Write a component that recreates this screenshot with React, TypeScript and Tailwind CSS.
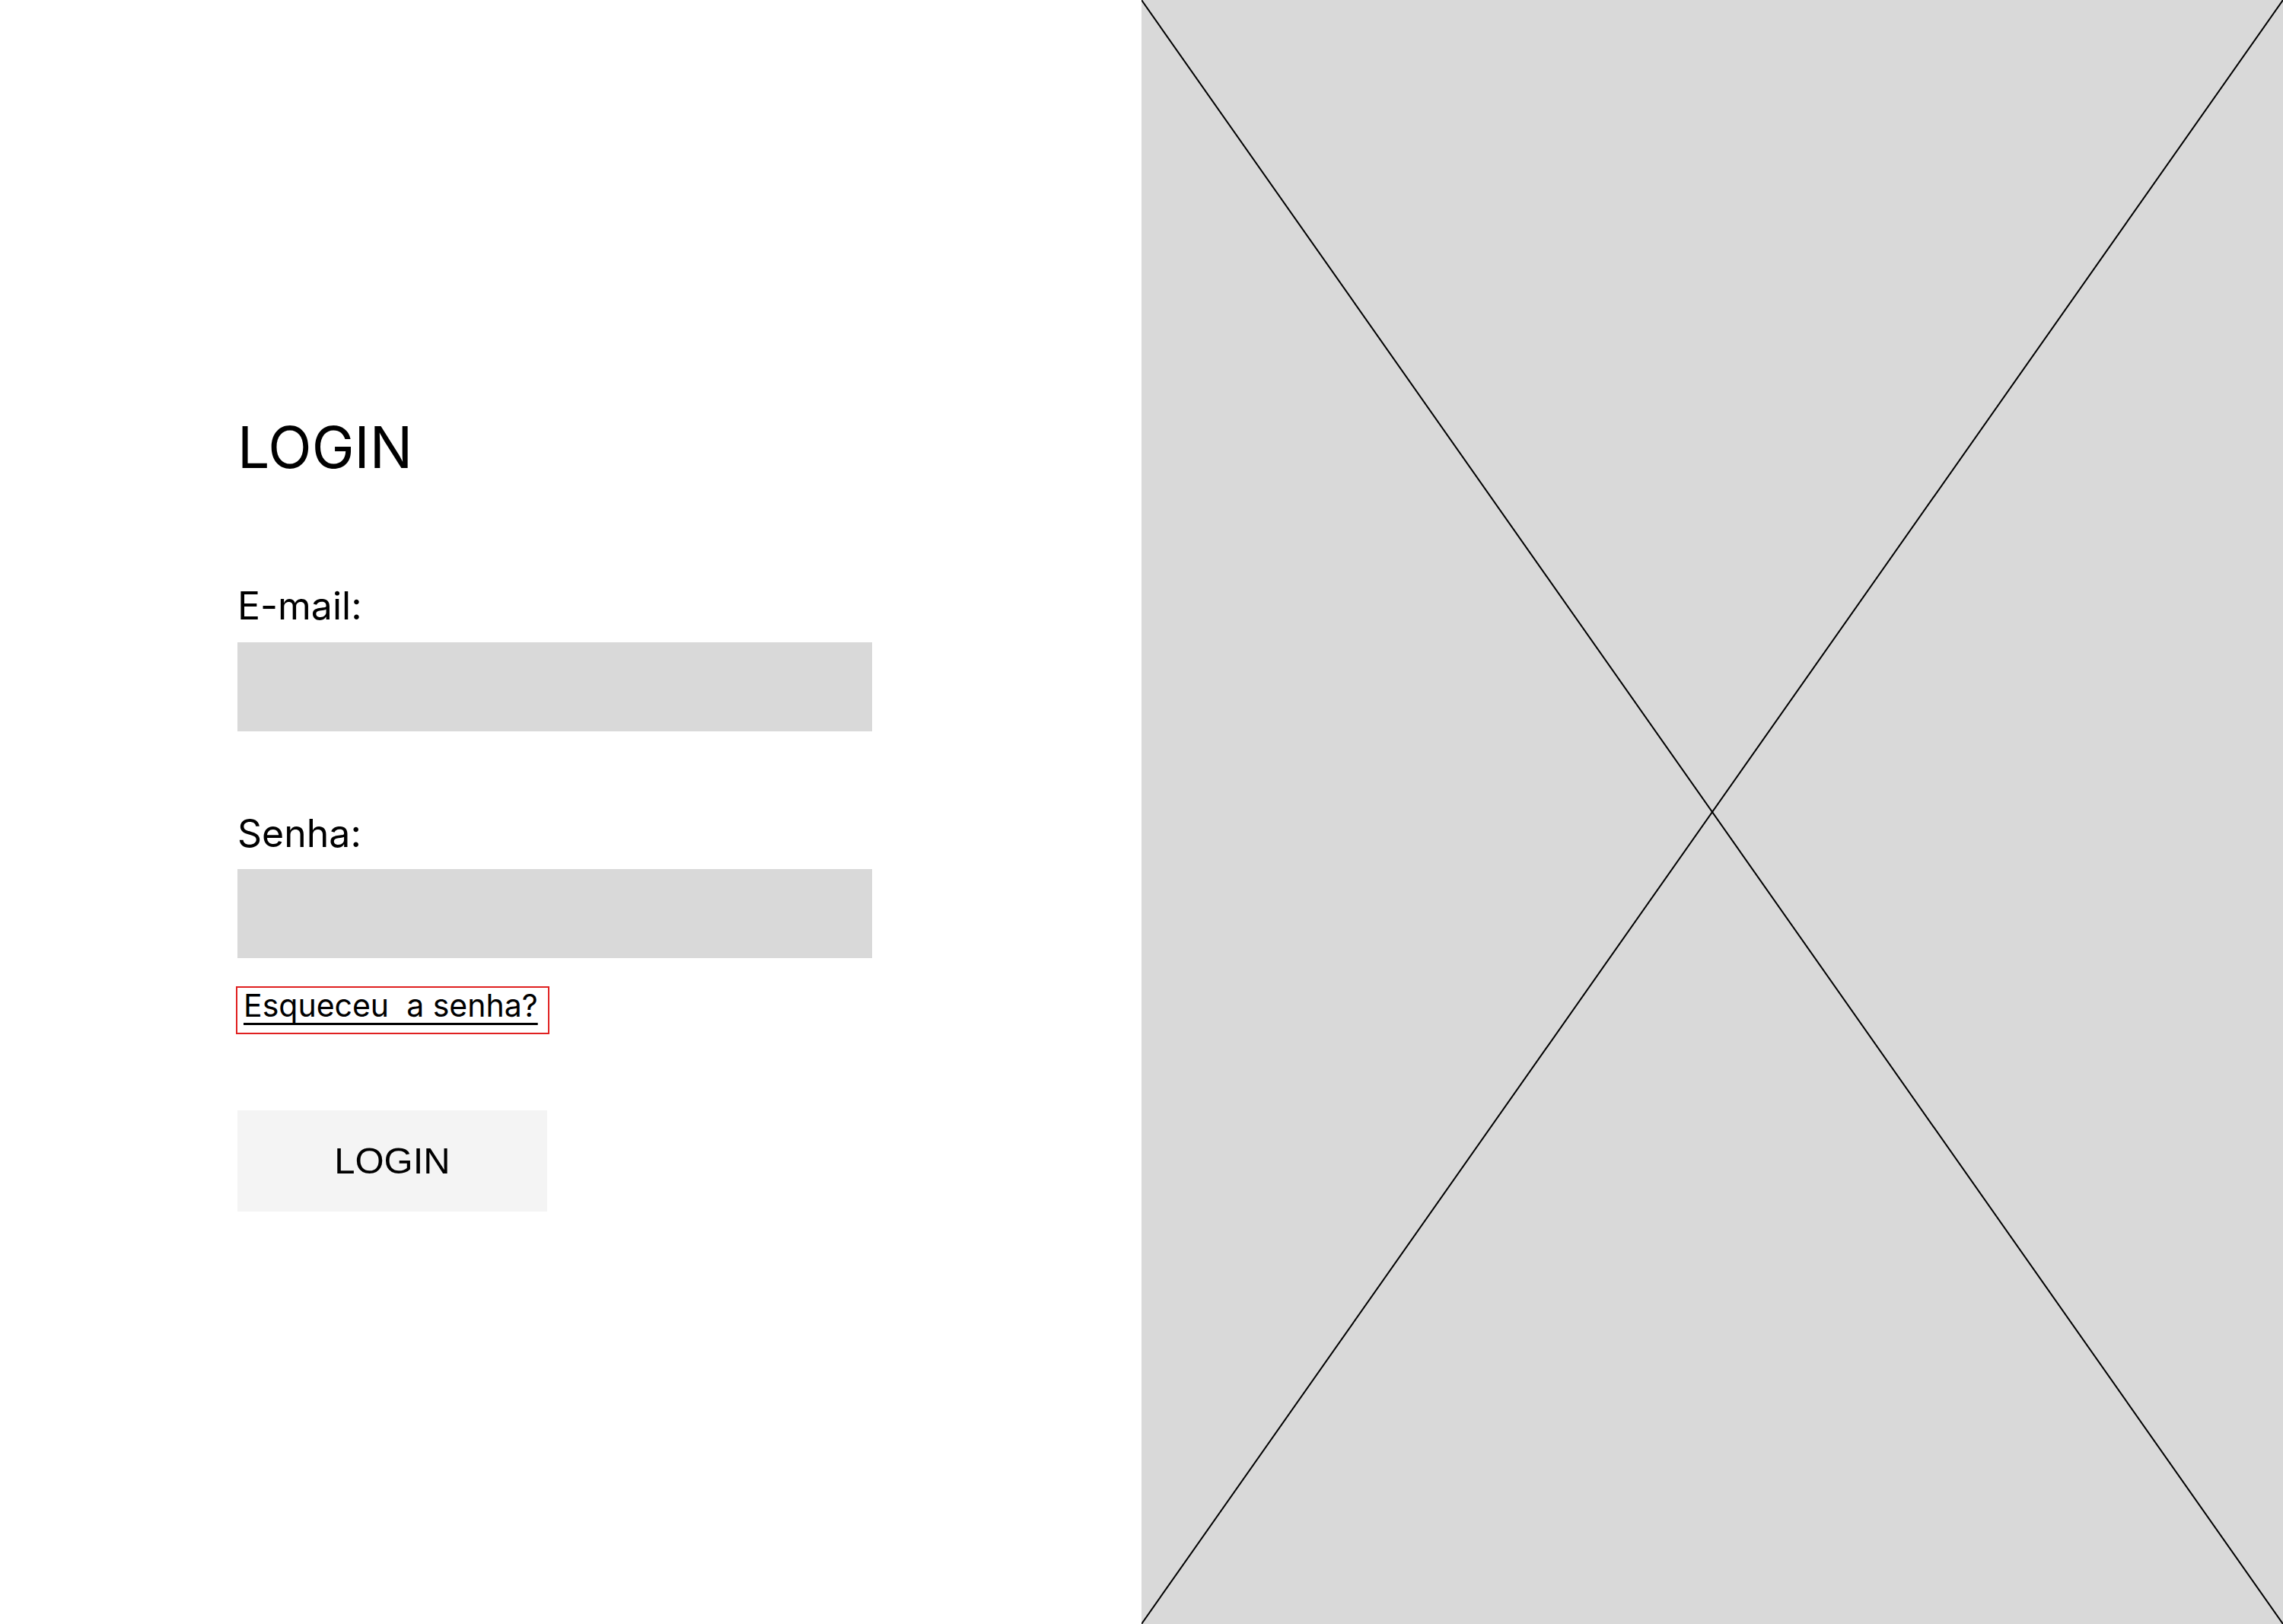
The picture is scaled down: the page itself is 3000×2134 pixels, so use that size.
import React from 'react';

const inter = { fontFamily: 'Inter, "Noto Sans", sans-serif' };

export default function App() {
  return (
    <div className="flex h-[2134px] w-[3000px] bg-white">
      {/* Form */}
      <div className="w-[1500px] shrink-0 pl-[312px] pt-[550px]" style={inter}>
        <h1 className="text-[75px] leading-none font-normal text-black">LOGIN</h1>

        <label className="block mt-[146px] text-[50px] leading-none text-black">E-mail:</label>
        <div className="mt-[23px] h-[117px] w-[834px] bg-[#d9d9d9]" />

        <label className="block mt-[109px] text-[50px] leading-none text-black">Senha:</label>
        <div className="mt-[22px] h-[117px] w-[834px] bg-[#d9d9d9]" />

        <a className="mt-[37px] ml-[-2px] flex h-[63px] w-[412px] items-start border-2 border-[#e02020] pl-[8px] pt-[3px] text-[41px] leading-none text-black underline decoration-[3px] underline-offset-[8px] whitespace-pre">
          Esqueceu  a senha?
        </a>

        <button
          className="mt-[100px] flex h-[133px] w-[407px] items-center justify-center bg-[#f4f4f4] text-[49px] leading-none text-black"
          style={{ fontFamily: '"Liberation Sans", Arial, sans-serif' }}
        >
          LOGIN
        </button>
      </div>

      {/* Image placeholder */}
      <div className="relative flex-1 bg-[#d9d9d9]">
        <svg className="absolute inset-0 h-full w-full" viewBox="0 0 1500 2134" preserveAspectRatio="none">
          <line x1="0" y1="0" x2="1500" y2="2134" stroke="#000" strokeWidth="2" />
          <line x1="1500" y1="0" x2="0" y2="2134" stroke="#000" strokeWidth="2" />
        </svg>
      </div>
    </div>
  );
}
